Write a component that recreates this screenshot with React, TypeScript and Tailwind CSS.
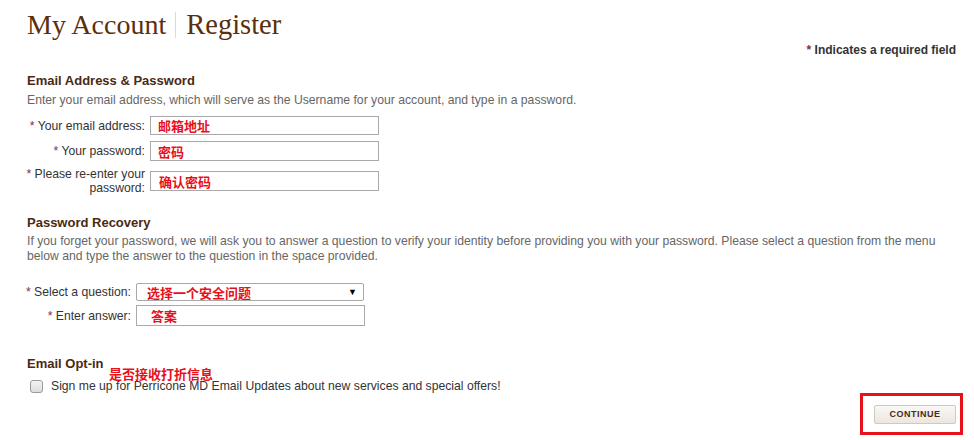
import React from "react";

const sans = { fontFamily: '"Liberation Sans", Arial, sans-serif' };
const cjk = { fontFamily: '"Noto Sans CJK SC", "Liberation Sans", sans-serif' };

function Star() {
  return <span className="text-[#7b3150]">*</span>;
}

function Red({ children, className = "" }: { children: React.ReactNode; className?: string }) {
  return (
    <span className={"text-[13px] font-bold leading-none text-[#e8101a] " + className} style={cjk}>
      {children}
    </span>
  );
}

export default function App() {
  return (
    <div className="relative h-[440px] w-[974px] overflow-hidden bg-white text-[12.2px] text-[#333]" style={sans}>
      {/* Title */}
      <div className="flex items-center pl-[27px] pt-[9px]" style={{ fontFamily: '"Liberation Serif", Georgia, serif' }}>
        <span className="text-[28px] leading-[32px] text-[#5b2f0e]">My Account</span>
        <span className="ml-[9px] mr-[10px] h-[26px] w-px bg-[#e2d8cc]" />
        <span className="text-[28.5px] leading-[32px] text-[#5b2f0e]">Register</span>
      </div>

      <div className="mt-[2px] pr-[18px] text-right text-[12px] font-bold leading-[14px] text-[#333]">
        <Star /> Indicates a required field
      </div>

      <div className="pl-[27px]">
        {/* Section 1 */}
        <div className="mt-[16px] text-[13px] font-bold leading-[16px] text-[#4a2a12]">Email Address &amp; Password</div>
        <div className="mt-[4px] leading-[14px] text-[#666]">
          Enter your email address, which will serve as the Username for your account, and type in a password.
        </div>

        <div className="-ml-[4px] mt-[9px] flex items-center">
          <div className="w-[122px] text-right leading-[14px]">
            <Star /> Your email address:
          </div>
          <div className="ml-[5px] flex h-[19px] w-[229px] items-center border border-[#a9a9a9] pl-[7px]">
            <Red>邮箱地址</Red>
          </div>
        </div>
        <div className="-ml-[4px] mt-[6px] flex items-center">
          <div className="w-[122px] text-right leading-[14px]">
            <Star /> Your password:
          </div>
          <div className="ml-[5px] flex h-[20px] w-[229px] items-center border border-[#a9a9a9] pl-[7px]">
            <Red>密码</Red>
          </div>
        </div>
        <div className="-ml-[4px] mt-[6px] flex items-center">
          <div className="w-[122px] text-right leading-[14px]">
            <Star /> Please re-enter your password:
          </div>
          <div className="ml-[5px] flex h-[20px] w-[229px] items-center border border-[#a9a9a9] pl-[8px]">
            <Red>确认密码</Red>
          </div>
        </div>

        {/* Section 2 */}
        <div className="mt-[20px] text-[13px] font-bold leading-[16px] text-[#4a2a12]">Password Recovery</div>
        <div className="mt-[3px] pr-[20px] leading-[15px] text-[#666]">
          If you forget your password, we will ask you to answer a question to verify your identity before providing you with your password. Please select a question from the menu below and type the answer to the question in the space provided.
        </div>

        <div className="-ml-[4px] mt-[19px] flex items-center">
          <div className="w-[108px] whitespace-nowrap text-right leading-[14px]">
            <Star /> Select a question:
          </div>
          <div className="ml-[5px] flex h-[18px] w-[228px] items-center justify-between rounded-[2px] border border-[#a9a9a9] pl-[10px] pr-[6px]">
            <Red>选择一个安全问题</Red>
            <span className="text-[9px] leading-none text-black">▼</span>
          </div>
        </div>
        <div className="-ml-[4px] mt-[4px] flex items-center">
          <div className="w-[108px] whitespace-nowrap text-right leading-[14px]">
            <Star /> Enter answer:
          </div>
          <div className="ml-[5px] flex h-[21px] w-[229px] items-center border border-[#a9a9a9] pl-[14px]">
            <Red>答案</Red>
          </div>
        </div>

        {/* Section 3 */}
        <div className="relative mt-[30px]">
          <div className="text-[13px] font-bold leading-[16px] text-[#4a2a12]">Email Opt-in</div>
          <Red className="absolute left-[82px] top-[11px]">是否接收打折信息</Red>
          <div className="mt-[7px] flex items-center">
            <span className="ml-[3px] h-[13px] w-[13px] rounded-[3px] border border-[#9a9a9a] bg-gradient-to-b from-[#f4f4f4] to-[#dcdcdc]" />
            <span className="ml-[8px] leading-[14px] text-[#333]">
              Sign me up for Perricone MD Email Updates about new services and special offers!
            </span>
          </div>
        </div>
      </div>

      {/* Continue */}
      <div className="mt-0 flex justify-end pr-[11px]">
        <div className="border-[3px] border-[#e8101a] pb-[8px] pl-[11px] pr-[4px] pt-[9px]">
          <button className="flex h-[19px] w-[82px] items-center justify-center rounded-[2px] border border-[#cfc9c2] bg-gradient-to-b from-[#faf8f6] to-[#ebe6e0] text-[9px] font-bold tracking-[0.5px] text-[#4a2a12]">
            CONTINUE
          </button>
        </div>
      </div>
    </div>
  );
}
